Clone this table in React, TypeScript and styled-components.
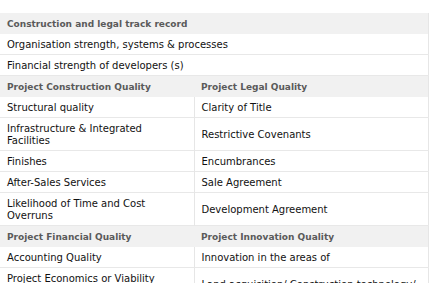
import styled, { createGlobalStyle } from "styled-components";

const GlobalStyle = createGlobalStyle`
  html, body {
    margin: 0;
    padding: 0;
    background: #fff;
  }
`;

type Row = { kind: "head" | "row"; left: string; right?: string };

const rows: Row[] = [
  { kind: "head", left: "Construction and legal track record" },
  { kind: "row", left: "Organisation strength, systems & processes" },
  { kind: "row", left: "Financial strength of developers (s)" },
  {
    kind: "head",
    left: "Project Construction Quality",
    right: "Project Legal Quality"
  },
  { kind: "row", left: "Structural quality", right: "Clarity of Title" },
  {
    kind: "row",
    left: "Infrastructure & Integrated Facilities",
    right: "Restrictive Covenants"
  },
  { kind: "row", left: "Finishes", right: "Encumbrances" },
  { kind: "row", left: "After-Sales Services", right: "Sale Agreement" },
  {
    kind: "row",
    left: "Likelihood of Time and Cost Overruns",
    right: "Development Agreement"
  },
  {
    kind: "head",
    left: "Project Financial Quality",
    right: "Project Innovation Quality"
  },
  { kind: "row", left: "Accounting Quality", right: "Innovation in the areas of" },
  {
    kind: "row",
    left: "Project Economics or Viability (revenues, costs, cash flows and funding structure)",
    right: "Land acquisition/ Construction technology/ Design"
  }
];

export default function App() {
  return (
    <>
      <GlobalStyle />
      <Page>
        <Table>
          <colgroup>
            <col style={{ width: 194 }} />
            <col />
          </colgroup>
          <tbody>
            {rows.map((r, i) =>
              r.kind === "head" ? (
                <HeadRow key={i}>
                  {r.right === undefined ? (
                    <HeadCell colSpan={2}>{r.left}</HeadCell>
                  ) : (
                    <>
                      <HeadCell>{r.left}</HeadCell>
                      <HeadCell>{r.right}</HeadCell>
                    </>
                  )}
                </HeadRow>
              ) : (
                <BodyRow key={i}>
                  {r.right === undefined ? (
                    <Cell colSpan={2}>{r.left}</Cell>
                  ) : (
                    <>
                      <Cell $divider>{r.left}</Cell>
                      <Cell>{r.right}</Cell>
                    </>
                  )}
                </BodyRow>
              )
            )}
          </tbody>
        </Table>
      </Page>
    </>
  );
}

const Page = styled.div`
  padding-top: 13px;
  height: 283px;
  overflow: hidden;
  box-sizing: border-box;
`;

const Table = styled.table`
  width: 429px;
  border-collapse: collapse;
  table-layout: fixed;
  border-right: 1px solid #e6e6e6;
  font-family: "DejaVu Sans", Verdana, sans-serif;
`;

const HeadRow = styled.tr`
  background: #f1f1f1;
`;

const BodyRow = styled.tr`
  background: #fff;
  border-bottom: 1px solid #e8e8e8;
`;

const HeadCell = styled.td`
  padding: 5px 7px 4px;
  font-size: 9px;
  line-height: 12px;
  font-weight: bold;
  color: #5a5a5a;
  text-align: left;
`;

const Cell = styled.td<{ $divider?: boolean }>`
  padding: 5px 7px 3px;
  font-size: 10px;
  line-height: 12px;
  color: #111;
  vertical-align: middle;
  border-right: ${({ $divider }) => ($divider ? "1px solid #e6e6e6" : "none")};
`;
